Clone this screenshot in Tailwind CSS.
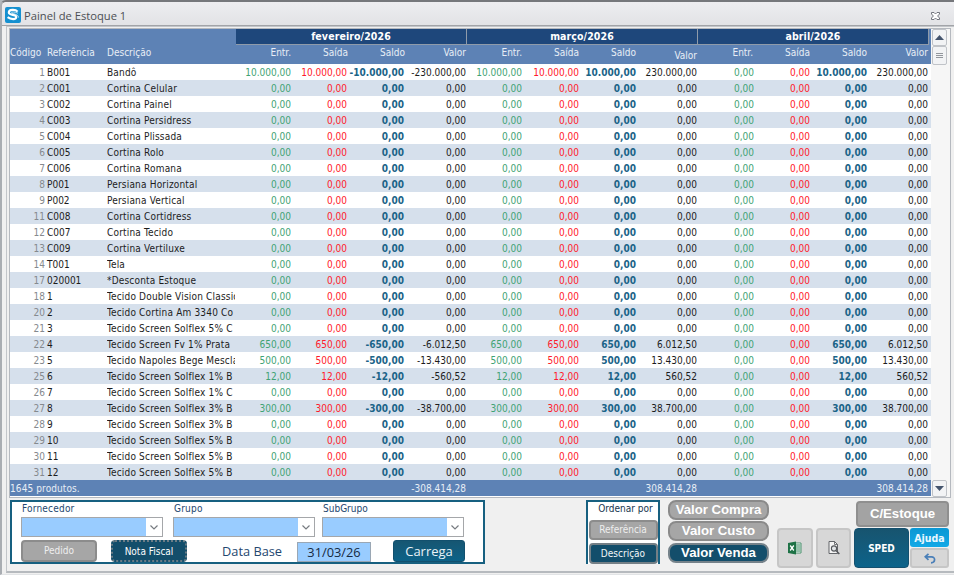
<!DOCTYPE html>
<html lang="pt-BR">
  <head>
    <meta charset="UTF-8" />
    <title>Painel de Estoque</title>
    <meta name="viewport" content="width=device-width, initial-scale=1.0" />
    <script src="https://cdn.jsdelivr.net/npm/@tailwindcss/browser@4"></script>
  </head>

  <body
    class="w-[954px] h-[575px] overflow-hidden bg-[#b3b9be] font-['DejaVu_Sans_Condensed','DejaVu_Sans',sans-serif] [font-stretch:condensed] text-[10px] text-[#1c1c1c]"
  >
    <div class="h-full flex flex-col border-t-2 border-t-[#75777b] border-l-2 border-l-[#a9adb2] border-b border-b-[#e2e4e6] bg-[#f0f0f0] rounded-tl-md">
      <!-- Barra de título -->
      <header class="h-6 shrink-0 flex items-center pl-[3px] pr-3.5 pt-1 bg-linear-to-b from-[#ededf0] to-[#e2e3e6] border-b border-[#a2a4a8] rounded-tl-md">
        <svg class="size-4 shrink-0 mb-px" viewBox="0 0 16 16">
          <rect width="16" height="16" rx="2" fill="#1590d0" />
          <path d="M12.600 4.600C10.500 2.200 3.800 2.200 3.800 5.500C3.800 8.600 11.300 7.200 11.300 10C11.300 12.800 6 12.800 2.600 10.200" fill="none" stroke="#fff" stroke-width="2.100" />
          <path d="M13 6.200C9.500 4.600 6.500 4.800 6.500 5.800C6.500 6.900 14 6.800 13.400 10.600" fill="none" stroke="#fff" stroke-width="0.700" />
        </svg>
        <h1 class="ml-[3px] text-[11.2px] leading-4 font-['Open_Sans',sans-serif] [font-stretch:normal] text-[#4c4f54]">Painel de Estoque 1</h1>
        <svg class="ml-auto w-[9px] h-2" viewBox="0 0 9 8" fill="#fff" stroke="#666a73" stroke-width="0.900">
          <path d="M.5 .5H3L4.500 2L6 .5H8.500V2L6.600 4L8.500 6V7.500H6L4.500 6L3 7.500H.5V6L2.400 4L.5 2Z" />
        </svg>
      </header>

      <main class="flex-1 min-h-0 flex flex-col ml-1 border-l border-t border-[#c2c5c9] border-b-2 border-b-[#b6babe] mb-px">
        <!-- Grade -->
        <section class="ml-0.5 mr-[3px] mt-px h-[470px] shrink-0 flex border border-[#b5b9bf] bg-white">
          <div class="w-[921px] shrink-0 flex flex-col">
            <div class="h-[35px] shrink-0 flex bg-[#5d82b5] text-[#e8eef6]">
              <div class="w-[226px] shrink-0 flex items-end pb-[5px] leading-[13px]">
                <span class="w-[37px] whitespace-nowrap">Código</span>
                <span class="w-[60px]">Referência</span>
                <span>Descrição</span>
              </div>
              <div id="months" class="flex"></div>
            </div>
            <div id="rows"></div>
            <div class="h-4 flex items-center bg-[#5d82b5] text-[#e8eef6]">
              <span class="w-[394px] tracking-[0.1px]">1645 produtos.</span>
              <span class="w-[62px] text-right">-308.414,28</span>
              <span class="w-[231px] text-right">308.414,28</span>
              <span class="w-[231px] text-right">308.414,28</span>
            </div>
          </div>
          <!-- Barra de rolagem -->
          <div class="flex-1 flex flex-col bg-[#f6f6f6] pl-px">
            <button class="h-[17px] w-[15px] border border-[#c0c3c8] rounded-xs bg-[#f2f3f5] flex items-center justify-center">
              <svg class="w-[9px] h-[5px]" viewBox="0 0 9 5"><path d="M0 5L4.500 0L9 5Z" fill="#44546d" /></svg>
            </button>
            <div class="h-[19px] w-[15px] border border-[#c0c3c8] rounded-xs bg-[#f2f3f5] flex flex-col items-center justify-center gap-px">
              <span class="w-[7px] h-px bg-[#92969c]"></span>
              <span class="w-[7px] h-px bg-[#92969c]"></span>
              <span class="w-[7px] h-px bg-[#92969c]"></span>
            </div>
            <button class="mt-auto h-[17px] w-[15px] border border-[#c0c3c8] rounded-xs bg-[#f2f3f5] flex items-center justify-center">
              <svg class="w-[9px] h-[5px]" viewBox="0 0 9 5"><path d="M0 0L4.500 5L9 0Z" fill="#44546d" /></svg>
            </button>
          </div>
        </section>

        <!-- Painel inferior -->
        <section class="flex pl-[3px] pt-[2px]">
          <!-- Filtros -->
          <div class="w-[475px] h-16 border-2 border-[#176080] bg-white pl-[9px] text-[#24476f]">
            <div class="flex gap-[10px]">
              <label class="w-[142px]">
                <span class="block h-[15px] leading-[13px] pl-px tracking-[0.2px]">Fornecedor</span>
                <span class="combo h-5 flex border border-[#a5a7aa] bg-[#99ccff]"></span>
              </label>
              <label class="w-[142px]">
                <span class="block h-[15px] leading-[13px] pl-px tracking-[0.2px]">Grupo</span>
                <span class="combo h-5 flex border border-[#a5a7aa] bg-[#99ccff]"></span>
              </label>
              <label class="w-[142px] -ml-[3px]">
                <span class="block h-[15px] leading-[13px] pl-px">SubGrupo</span>
                <span class="combo h-5 flex border border-[#a5a7aa] bg-[#99ccff]"></span>
              </label>
            </div>
            <div class="flex mt-[3px]">
              <button class="w-[76px] h-[22px] border-2 border-[#8c8c8c] rounded-sm bg-[#a6a6a6] text-[#eeeeee] leading-[18px]">Pedido</button>
              <button class="ml-[14px] w-[76px] h-[22px] border-2 border-dotted border-[#6a7c86] rounded-sm bg-[#134e6b] text-white leading-[19px]">Nota Fiscal</button>
              <span class="ml-[35px] w-[75px] h-[22px] leading-[23px] whitespace-nowrap text-[12.8px] font-['Open_Sans',sans-serif] [font-stretch:normal]">Data Base</span>
              <span class="mt-[2px] w-[74px] h-5 border border-[#9aa7b4] bg-[#99ccff] text-center leading-[18px] text-[12.8px] font-['Open_Sans',sans-serif] [font-stretch:normal] text-[#16293f]">31/03/26</span>
              <button class="ml-[22px] w-[72px] h-[22px] rounded-[3px] border border-[#12506e] bg-linear-to-b from-[#165672] to-[#0c6288] text-[#e9f3f8] text-[13px] leading-[20px] font-['Open_Sans',sans-serif] [font-stretch:normal]">Carrega</button>
            </div>
          </div>

          <!-- Ordenação -->
          <div class="ml-[101px] w-[74px] h-16 border-2 border-b-0 border-[#176080] bg-white text-center text-[#16364f] flex flex-col items-center">
            <span class="h-[18px] leading-[14px] pl-[5px]">Ordenar por</span>
            <button class="w-[69px] h-5 shrink-0 border-2 border-[#8c8c8c] rounded-sm bg-[#a6a6a6] text-[#eeeeee] leading-4">Referência</button>
            <button class="mt-[3px] w-[69px] h-[21px] shrink-0 border-2 border-[#747f86] rounded-sm bg-[#134e6b] text-[#f2f6f8] leading-[17px]">Descrição</button>
          </div>

          <!-- Valores -->
          <div class="ml-[8px] w-[101px] flex flex-col gap-px text-[13.2px] font-bold font-['Liberation_Sans',sans-serif] text-white">
            <button class="h-5 border-2 border-[#8a8a8a] rounded-lg bg-[#a6a6a6] leading-4 whitespace-nowrap">Valor Compra</button>
            <button class="h-5 border-2 border-[#8a8a8a] rounded-lg bg-[#a6a6a6] leading-4 whitespace-nowrap">Valor Custo</button>
            <button class="h-5 mt-px border-2 border-[#75828a] rounded-lg bg-[#134e6b] leading-4 whitespace-nowrap">Valor Venda</button>
          </div>

          <div class="ml-[8px] mt-px flex flex-col items-end">
            <button class="w-[93px] h-[26px] border-2 border-[#8f8f8f] rounded-sm bg-[#a3a3a3] text-white text-[13.2px] font-bold leading-5 font-['Liberation_Sans',sans-serif]">C/Estoque</button>
            <div class="flex mt-px">
              <button class="w-9 h-10 rounded-sm border-2 border-[#c6c6c6] bg-[#d7d7d7] flex items-center justify-center">
                <svg class="w-[14px] h-[14px]" viewBox="0 0 14 14">
                  <path d="M7 2H13V12H7Z" fill="#fff" stroke="#2b8256" stroke-width="0.800" />
                  <path d="M8 4H12.500M8 6H12.500M8 8H12.500M8 10H12.500" stroke="#2b8256" stroke-width="1" />
                  <path d="M0 2L8 .6V13.400L0 12Z" fill="#1e7246" />
                  <path d="M2.200 4.500L5.800 9.500M5.800 4.500L2.200 9.500" stroke="#fff" stroke-width="1.300" />
                </svg>
              </button>
              <button class="ml-[3px] w-[35px] h-10 rounded-sm border-2 border-[#c6c6c6] bg-[#d7d7d7] flex items-center justify-center">
                <svg class="w-[12px] h-[14px]" viewBox="0 0 12 14" fill="none" stroke="#55585c">
                  <path d="M1 .5H6.500L9.500 3.500V12.500H1Z" fill="#f4f4f4" stroke-width="0.900" />
                  <path d="M6.500 .5V3.500H9.500" stroke-width="0.800" />
                  <circle cx="6" cy="7.500" r="2.600" fill="#e3e6e9" stroke-width="1.100" />
                  <path d="M8 9.500L11.300 13" stroke-width="1.600" />
                </svg>
              </button>
              <button class="ml-[3px] w-[55px] h-10 rounded-sm border border-[#14506f] bg-linear-to-b from-[#17546f] to-[#0b638a] text-white font-bold">SPED</button>
              <div class="ml-px w-[39px] flex flex-col gap-px">
                <button class="h-[19px] rounded-[3px] bg-linear-to-b from-[#0b97d3] to-[#12a9e7] text-[#eaf8ff] font-bold text-[10.5px] leading-[18px]">Ajuda</button>
                <button class="h-5 rounded-[3px] border-2 border-[#c6c6c6] bg-[#d7d7d7] flex items-center justify-center">
                  <svg class="w-[12px] h-[11px]" viewBox="0 0 12 11" fill="none" stroke="#4a7fb8" stroke-width="1.700">
                    <path d="M4.500 .8L1.200 3.800L4.500 6.800M1.500 3.800H7.500C11.700 3.800 11.700 9.800 7 9.800" />
                  </svg>
                </button>
              </div>
            </div>
          </div>
        </section>
      </main>
    </div>

    <script>
      // código, referência, descrição, quantidade, valor
      const products = [
        [1, "B001", "Bandô", "10.000,00", "230.000,00"],
        [2, "C001", "Cortina Celular"],
        [3, "C002", "Cortina Painel"],
        [4, "C003", "Cortina Persidress"],
        [5, "C004", "Cortina Plissada"],
        [6, "C005", "Cortina Rolo"],
        [7, "C006", "Cortina Romana"],
        [8, "P001", "Persiana Horizontal"],
        [9, "P002", "Persiana Vertical"],
        [11, "C008", "Cortina Cortidress"],
        [12, "C007", "Cortina Tecido"],
        [13, "C009", "Cortina Vertiluxe"],
        [14, "T001", "Tela"],
        [17, "020001", "*Desconta Estoque"],
        [18, "1", "Tecido Double Vision Classic"],
        [20, "2", "Tecido Cortina Am 3340 Co"],
        [21, "3", "Tecido Screen Solflex 5% C"],
        [22, "4", "Tecido Screen Fv 1% Prata", "650,00", "6.012,50"],
        [23, "5", "Tecido Napoles Bege Mescla", "500,00", "13.430,00"],
        [25, "6", "Tecido Screen Solflex 1% B", "12,00", "560,52"],
        [26, "7", "Tecido Screen Solflex 1% C"],
        [27, "8", "Tecido Screen Solflex 3% B", "300,00", "38.700,00"],
        [28, "9", "Tecido Screen Solflex 3% B"],
        [29, "10", "Tecido Screen Solflex 5% B"],
        [30, "11", "Tecido Screen Solflex 5% B"],
        [31, "12", "Tecido Screen Solflex 5% B"],
      ];

      document.getElementById("months").innerHTML = ["fevereiro/2026", "março/2026", "abril/2026"]
        .map(
          (m, i) => `
          <div class="w-[231px]">
            <div class="h-4 border-r border-b border-[#8f9baa] bg-[#1e477b] text-center text-white font-bold leading-[15px] text-[10.5px] tracking-[0.1px]">${m}</div>
            <div class="flex text-right leading-[13px] pt-px">
              <span class="w-[55px]">Entr.</span>
              <span class="w-[57px]">Saída</span>
              <span class="w-[57px]">Saldo</span>
              <span class="w-[61px] ${i === 1 ? "pt-[3px]" : ""}">Valor</span>
            </div>
          </div>`
        )
        .join("");

      const zero = "0,00";
      document.getElementById("rows").innerHTML = products
        .map(([code, ref, desc, qty = zero, value = zero], i) => {
          const neg = qty === zero ? "" : "-";
          const cells = [
            [qty, qty, neg + qty, neg + value],
            [qty, qty, qty, value],
            [zero, zero, qty, value],
          ]
            .map(
              ([e, s, b, v]) => `
              <span class="text-[#3fa374]">${e}</span>
              <span class="text-[#ff1a2b]">${s}</span>
              <span class="flex justify-end font-bold text-[#1b6488]">${b}</span>
              <span>${v}</span>`
            )
            .join("");
          return `
          <div class="grid grid-cols-[35px_62px_128px_56px_56px_57px_62px_56px_57px_57px_61px_57px_56px_57px_61px] h-4 leading-[17.5px] text-right whitespace-nowrap ${i % 2 ? "bg-[#d6e0ec]" : "bg-white"}">
            <span class="text-[#85898e]">${code}</span>
            <span class="pl-[2px] text-left">${ref}</span>
            <span class="text-left overflow-hidden tracking-[0.18px]">${desc}</span>
            ${cells}
          </div>`;
        })
        .join("");

      // seta dos campos de seleção
      document.querySelectorAll(".combo").forEach((el) => {
        el.innerHTML = `
          <span class="ml-auto w-4 h-full bg-white flex items-center justify-center">
            <svg class="w-[8px] h-[5px]" viewBox="0 0 8 5" fill="none" stroke="#777b80" stroke-width="1.200"><path d="M.5 .5L4 4L7.500 .5" /></svg>
          </span>`;
      });
    </script>
  </body>
</html>
